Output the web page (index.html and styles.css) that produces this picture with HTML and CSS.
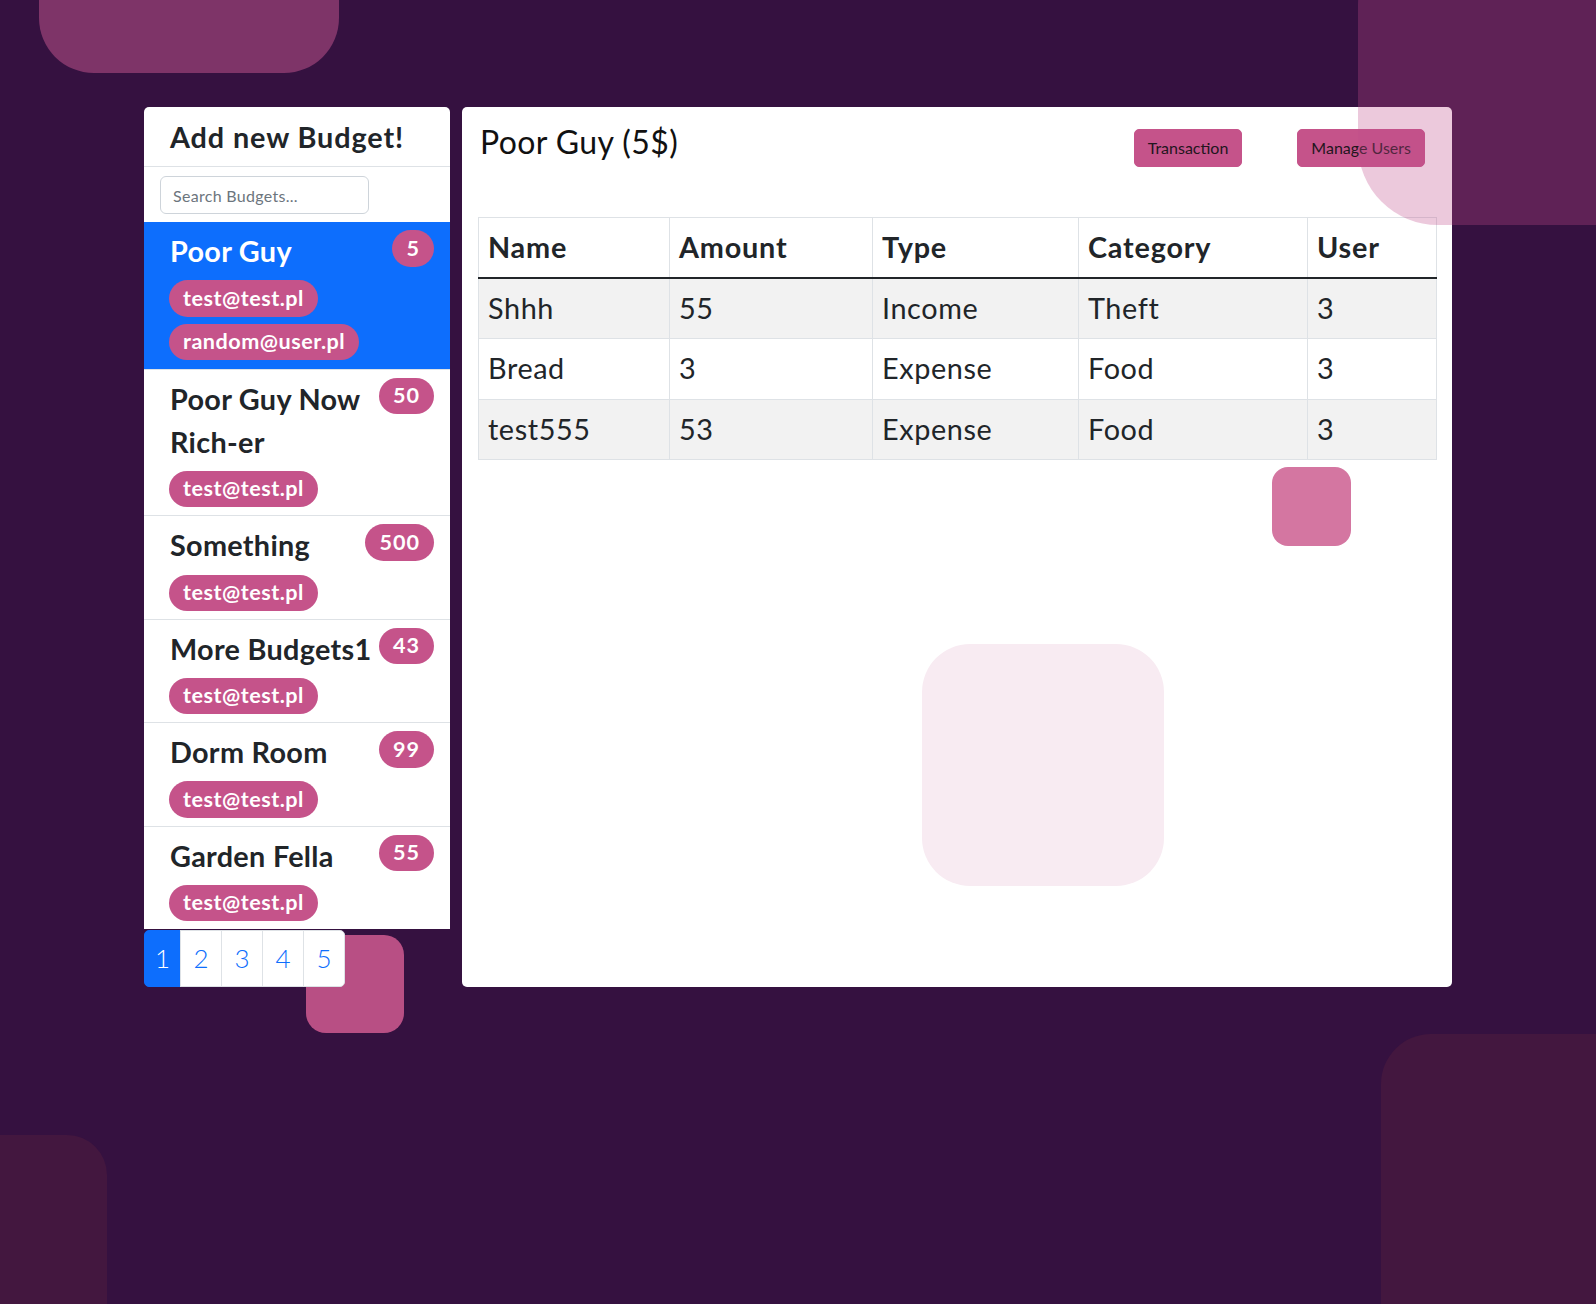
FILE: index.html
```html
<!DOCTYPE html>
<html lang="en">
<head>
<meta charset="utf-8">
<title>Budgets</title>
<link rel="stylesheet" href="styles.css">
</head>
<body>
<div class="page">
  <div class="shape shape-tl"></div>
  <div class="shape shape-bl"></div>
  <div class="shape shape-br"></div>

  <main class="layout">
    <aside class="sidebar">
      <div class="budget-card">
        <div class="card-header"><h3 class="card-title">Add new Budget!</h3></div>
        <div class="search-row"><input class="search" type="text" placeholder="Search Budgets..."></div>
        <ul class="budget-list">
          <li class="budget-item active">
            <div class="budget-info">
              <div class="budget-name">Poor Guy</div>
              <span class="pill">test@test.pl</span>
              <span class="pill">random@user.pl</span>
            </div>
            <span class="badge">5</span>
          </li>
          <li class="budget-item">
            <div class="budget-info">
              <div class="budget-name">Poor Guy Now Rich-er</div>
              <span class="pill">test@test.pl</span>
            </div>
            <span class="badge">50</span>
          </li>
          <li class="budget-item">
            <div class="budget-info">
              <div class="budget-name">Something</div>
              <span class="pill">test@test.pl</span>
            </div>
            <span class="badge">500</span>
          </li>
          <li class="budget-item">
            <div class="budget-info">
              <div class="budget-name">More Budgets1</div>
              <span class="pill">test@test.pl</span>
            </div>
            <span class="badge">43</span>
          </li>
          <li class="budget-item">
            <div class="budget-info">
              <div class="budget-name">Dorm Room</div>
              <span class="pill">test@test.pl</span>
            </div>
            <span class="badge">99</span>
          </li>
          <li class="budget-item">
            <div class="budget-info">
              <div class="budget-name">Garden Fella</div>
              <span class="pill">test@test.pl</span>
            </div>
            <span class="badge">55</span>
          </li>
        </ul>
      </div>
      <div class="pager-wrap">
        <div class="shape shape-pager"></div>
        <nav class="pagination">
          <a class="page-link first current">1</a>
          <a class="page-link">2</a>
          <a class="page-link">3</a>
          <a class="page-link">4</a>
          <a class="page-link last">5</a>
        </nav>
      </div>
    </aside>

    <section class="main-card">
      <div class="main-head">
        <h2 class="main-title">Poor Guy (5$)</h2>
        <div class="actions">
          <button class="btn">Transaction</button>
          <button class="btn">Manage Users</button>
        </div>
      </div>
      <table class="tx-table">
        <thead>
          <tr><th>Name</th><th>Amount</th><th>Type</th><th>Category</th><th>User</th></tr>
        </thead>
        <tbody>
          <tr><td>Shhh</td><td>55</td><td>Income</td><td>Theft</td><td>3</td></tr>
          <tr><td>Bread</td><td>3</td><td>Expense</td><td>Food</td><td>3</td></tr>
          <tr><td>test555</td><td>53</td><td>Expense</td><td>Food</td><td>3</td></tr>
        </tbody>
      </table>
      <div class="shape shape-small"></div>
      <div class="shape shape-light"></div>
    </section>
  </main>

  <div class="shape shape-tr"></div>
</div>
</body>
</html>
```

FILE: styles.css
```css
* { box-sizing: border-box; }

html, body {
  margin: 0;
  padding: 0;
}

body {
  background: #351140;
  font-family: "Lato", "Liberation Sans", sans-serif;
  color: #212529;
}

.page {
  position: relative;
  width: 100%;
  height: 1304px;
  overflow: hidden;
}

.shape { position: absolute; }

.shape-tl {
  left: 39px;
  top: -227px;
  width: 300px;
  height: 300px;
  border-radius: 55px;
  background: #7e3468;
}

.shape-bl {
  left: -200px;
  top: 1135px;
  width: 307px;
  height: 300px;
  border-radius: 40px;
  background: #43173f;
}

.shape-br {
  left: 1381px;
  top: 1034px;
  width: 400px;
  height: 400px;
  border-radius: 50px;
  background: #43173f;
}

.shape-tr {
  left: 1358px;
  top: -75px;
  width: 320px;
  height: 300px;
  border-radius: 80px;
  background: rgba(192, 76, 139, 0.3);
  z-index: 3;
  pointer-events: none;
}

.layout {
  position: relative;
  z-index: 1;
  width: 1308px;
  margin: 0 auto;
  padding-top: 107px;
  display: grid;
  grid-template-columns: 306px 990px;
  column-gap: 12px;
  align-items: start;
}

/* Sidebar */
.budget-card {
  background: #fff;
  border-radius: 5px 5px 0 0;
  overflow: hidden;
}

.card-header {
  padding: 9px 24px 7px 26px;
  border-bottom: 1px solid #dee2e6;
}

.card-title {
  margin: 0;
  font-size: 28.8px;
  font-weight: 700;
  line-height: 43.2px;
  letter-spacing: 0.9px;
  color: #212529;
}

.search-row {
  padding: 9px 16px 8px;
}

.search {
  display: block;
  width: 209px;
  height: 38px;
  padding: 6px 12px;
  border: 1px solid #ced4da;
  border-radius: 6px;
  font-family: inherit;
  font-size: 16px;
  letter-spacing: 0.3px;
  color: #212529;
  background: #fff;
}

.search::placeholder { color: #6c757d; }

.budget-list {
  list-style: none;
  margin: 0;
  padding: 0;
}

.budget-item {
  display: flex;
  justify-content: space-between;
  align-items: flex-start;
  padding: 8px 16px 8px 26px;
  border-top: 1px solid #dee2e6;
  background: #fff;
  color: #212529;
}

.budget-item.active {
  border-top: 0;
  background: #0d6efd;
  color: #fff;
  padding-bottom: 9px;
}

.budget-info {
  flex: 1;
  min-width: 0;
}

.budget-name {
  font-size: 28.8px;
  font-weight: 700;
  line-height: 43.2px;
  letter-spacing: 0.3px;
  margin-bottom: 7px;
}

.pill {
  display: block;
  width: fit-content;
  margin-left: -1px;
  padding: 7.3px 14px;
  border-radius: 50px;
  background: #c5538a;
  color: #fff;
  font-size: 21.6px;
  font-weight: 700;
  line-height: 21.6px;
  letter-spacing: 0.5px;
}

.pill + .pill { margin-top: 7px; }

.badge {
  flex: none;
  padding: 7.5px 14px;
  border-radius: 50px;
  background: #c5538a;
  color: #fff;
  font-size: 21.6px;
  font-weight: 700;
  line-height: 21.6px;
  letter-spacing: 1px;
}

/* Pagination */
.pager-wrap {
  position: relative;
  height: 57px;
  margin-top: 1px;
}

.shape-pager {
  left: 162px;
  top: 5px;
  width: 98px;
  height: 98px;
  border-radius: 20px;
  background: #b84f84;
  z-index: 0;
}

.pagination {
  position: relative;
  z-index: 1;
  display: flex;
}

.page-link {
  display: block;
  width: 42px;
  height: 57px;
  margin-left: -1px;
  border: 1px solid #dee2e6;
  background: #fff;
  color: #0d6efd;
  font-size: 26px;
  font-weight: 300;
  line-height: 55px;
  text-align: center;
}

.page-link.first {
  margin-left: 0;
  width: 37px;
  border-radius: 5px 0 0 5px;
}

.page-link.last { border-radius: 0 5px 5px 0; }

.page-link.current {
  background: #0d6efd;
  border-color: #0d6efd;
  color: #fff;
}

/* Main card */
.main-card {
  position: relative;
  height: 880px;
  background: #fff;
  border-radius: 5px;
  padding: 16px 16px 16px;
}

.main-head {
  display: flex;
  align-items: flex-start;
}

.main-title {
  margin: 0 0 0 2px;
  font-size: 32px;
  font-weight: 400;
  line-height: 38.4px;
  letter-spacing: 0.4px;
  color: #111;
}

.actions {
  margin-left: auto;
  margin-right: 11px;
  margin-top: 6px;
  display: flex;
  gap: 55px;
}

.btn {
  height: 38px;
  padding: 6px 13px;
  border: 1px solid #c5538a;
  border-radius: 5px;
  background: #c5538a;
  color: #22161d;
  font-family: inherit;
  font-size: 16px;
  line-height: 24px;
}

.tx-table {
  position: relative;
  z-index: 1;
  width: 958px;
  margin-top: 50px;
  border-collapse: collapse;
  table-layout: fixed;
  font-size: 28.8px;
  line-height: 43.2px;
}

.tx-table th,
.tx-table td {
  padding: 8px 9px;
  border: 1px solid #dee2e6;
  text-align: left;
  color: #212529;
}

.tx-table th {
  font-weight: 700;
  letter-spacing: 0.8px;
  border-bottom: 2px solid #212529;
  background: #fff;
}

.tx-table td {
  font-weight: 400;
  letter-spacing: 0.6px;
}

.tx-table th:nth-child(1) { width: 191px; }
.tx-table th:nth-child(2) { width: 203px; }
.tx-table th:nth-child(3) { width: 206px; }
.tx-table th:nth-child(4) { width: 229px; }
.tx-table th:nth-child(5) { width: 129px; }

.tx-table tbody tr:nth-child(odd) td { background: #f2f2f2; }

.shape-small {
  left: 810px;
  top: 360px;
  width: 79px;
  height: 79px;
  border-radius: 16px;
  background: #d476a1;
}

.shape-light {
  left: 460px;
  top: 537px;
  width: 242px;
  height: 242px;
  border-radius: 48px;
  background: #f8ebf2;
}
```
